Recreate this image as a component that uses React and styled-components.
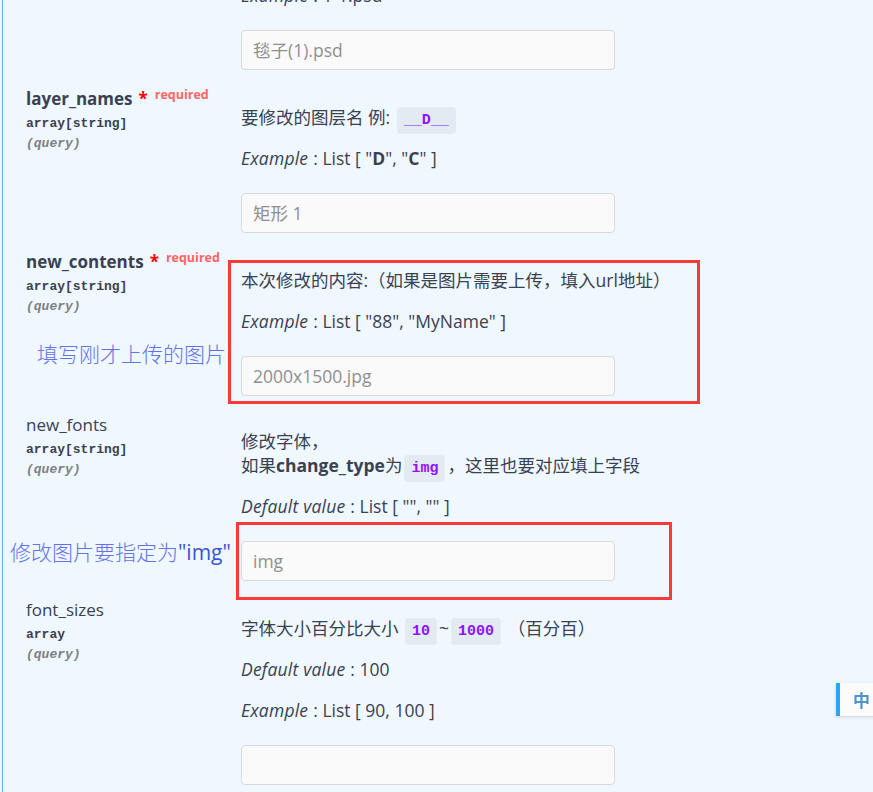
import React from "react";
import styled, { createGlobalStyle } from "styled-components";

const GlobalStyle = createGlobalStyle`
  html, body {
    margin: 0;
    padding: 0;
    background: #eff7ff;
    overflow: hidden;
  }
  body {
    font-family: "Open Sans", "Noto Sans CJK SC", sans-serif;
    color: #3b4151;
  }
`;

const Page = styled.div`
  position: relative;
  margin-left: 2px;
  border-left: 1px solid #61affe;
  min-height: 792px;
  overflow: hidden;
`;

const Table = styled.div`
  margin-top: -17px;
  display: flex;
  flex-direction: column;
  gap: 18px;
`;

const Row = styled.div`
  display: grid;
  grid-template-columns: 215px 1fr;
  padding-left: 23px;
`;

const NameCell = styled.div`
  display: flex;
  flex-direction: column;
  align-items: flex-start;
`;

const Name = styled.div`
  font-family: "Open Sans", "Noto Sans CJK SC", sans-serif;
  font-size: 17px;
  line-height: 22px;
  height: 22px;
  font-weight: ${(p) => (p.$required ? 700 : 400)};
  white-space: nowrap;
  display: flex;
  align-items: flex-start;
`;

const Star = styled.span`
  color: #ff0000;
  margin-left: 6px;
  font-size: 17px;
  font-weight: 700;
`;

const Required = styled.span`
  color: #ff6366;
  font-size: 12.5px;
  line-height: 14px;
  font-weight: 700;
  margin-left: 7px;
`;

const Type = styled.div`
  font-family: "Liberation Mono", monospace;
  font-weight: 700;
  font-size: 13px;
  line-height: 20px;
  margin-top: 4px;
`;

const Place = styled.div`
  font-family: "Liberation Mono", monospace;
  font-style: italic;
  font-weight: 700;
  font-size: 13px;
  line-height: 20px;
  color: #808080;
`;

const Note = styled.div`
  font-family: "Noto Sans CJK SC", sans-serif;
  font-weight: 300;
  font-size: 21px;
  line-height: 28px;
  color: #6472e6;
  white-space: nowrap;
  margin-top: ${(p) => p.$top}px;
  margin-left: ${(p) => p.$left}px;

  b {
    font-family: "Open Sans", sans-serif;
    font-weight: 500;
    color: #3a55d6;
  }
`;

const DescCell = styled.div`
  position: relative;
  padding-top: ${(p) => p.$pad}px;
  font-size: 17.5px;
`;

const Para = styled.p`
  margin: 0 0 17px;
  line-height: 24px;
  white-space: nowrap;

  &:last-of-type {
    margin-bottom: 23px;
  }

  b {
    font-weight: 700;
    line-height: 1;
  }
`;

const Label = styled.i`
  font-style: italic;
  line-height: 1;
  margin-right: 5px;
  letter-spacing: 0.2px;
`;

const Code = styled.code`
  font-family: "Liberation Mono", monospace;
  font-weight: 700;
  font-size: 15px;
  line-height: 1;
  color: #9012fe;
  background: rgba(0, 0, 0, 0.05);
  border-radius: 4px;
  padding: 5px 7px;
  margin: 0 2px;
`;

const Input = styled.input`
  display: block;
  box-sizing: border-box;
  width: 374px;
  height: 40px;
  padding: 0 11px;
  background: #fafafa;
  border: 1px solid #d9d9d9;
  border-radius: 4px;
  font-family: "Open Sans", "Noto Sans CJK SC", sans-serif;
  font-size: 17.5px;
  color: #3b4151;
  outline: none;

  &::placeholder {
    color: #8f8f8f;
  }
`;

const Mark = styled.div`
  position: absolute;
  box-sizing: border-box;
  border: 3px solid #f73b3b;
  pointer-events: none;
  left: ${(p) => p.$left}px;
  top: ${(p) => p.$top}px;
  width: ${(p) => p.$w}px;
  height: ${(p) => p.$h}px;
`;

const LangTab = styled.div`
  position: fixed;
  left: 836px;
  top: 683px;
  width: 50px;
  height: 33px;
  box-sizing: border-box;
  border-left: 4px solid #2ba5f7;
  background: #fbfbfb;
  box-shadow: 0 1px 3px rgba(0, 0, 0, 0.15);
  color: #4d94c8;
  font-family: "Noto Sans CJK SC", sans-serif;
  font-size: 17px;
  font-weight: 700;
  line-height: 33px;
  padding-left: 13px;
`;

const Param = ({ name, required, type, note, children, mark, pad = 17 }) => (
  <Row>
    <NameCell>
      {name && (
        <>
          <Name $required={required}>
            {name}
            {required && (
              <>
                <Star>*</Star>
                <Required>required</Required>
              </>
            )}
          </Name>
          <Type>{type}</Type>
          <Place>(query)</Place>
        </>
      )}
      {note}
    </NameCell>
    <DescCell $pad={pad}>
      {children}
      {mark}
    </DescCell>
  </Row>
);

export default function App() {
  return (
    <>
      <GlobalStyle />
      <Page>
        <Table>
          <Param pad={0}>
            <Para>
              <Label>Example</Label>: 1-1.psd
            </Para>
            <Input placeholder="毯子(1).psd" />
          </Param>

          <Param name="layer_names" required type="array[string]">
            <Para>
              要修改的图层名 例: <Code>__D__</Code>
            </Para>
            <Para>
              <Label>Example</Label>: List [ "<b>D</b>", "<b>C</b>" ]
            </Para>
            <Input placeholder="矩形 1" />
          </Param>

          <Param
            name="new_contents"
            required
            type="array[string]"
            note={
              <Note $top={22} $left={11}>
                填写刚才上传的图片
              </Note>
            }
            mark={<Mark $left={-13} $top={9} $w={472} $h={144} />}
          >
            <Para>本次修改的内容:（如果是图片需要上传，填入url地址）</Para>
            <Para>
              <Label>Example</Label>: List [ "88", "MyName" ]
            </Para>
            <Input placeholder="2000x1500.jpg" />
          </Param>

          <Param
            name="new_fonts"
            type="array[string]"
            pad={15}
            note={
              <Note $top={57} $left={-16}>
                修改图片要指定为<b>"img"</b>
              </Note>
            }
            mark={<Mark $left={-5} $top={108} $w={436} $h={78} />}
          >
            <Para>
              修改字体，
              <br />
              如果<b>change_type</b>为<Code>img</Code>，这里也要对应填上字段
            </Para>
            <Para>
              <Label>Default value</Label>: List [ "", "" ]
            </Para>
            <Input placeholder="img" />
          </Param>

          <Param name="font_sizes" type="array">
            <Para>
              字体大小百分比大小 <Code>10</Code>~<Code>1000</Code> （百分百）
            </Para>
            <Para>
              <Label>Default value</Label>: 100
            </Para>
            <Para>
              <Label>Example</Label>: List [ 90, 100 ]
            </Para>
            <Input />
          </Param>
        </Table>
        <LangTab>中</LangTab>
      </Page>
    </>
  );
}
